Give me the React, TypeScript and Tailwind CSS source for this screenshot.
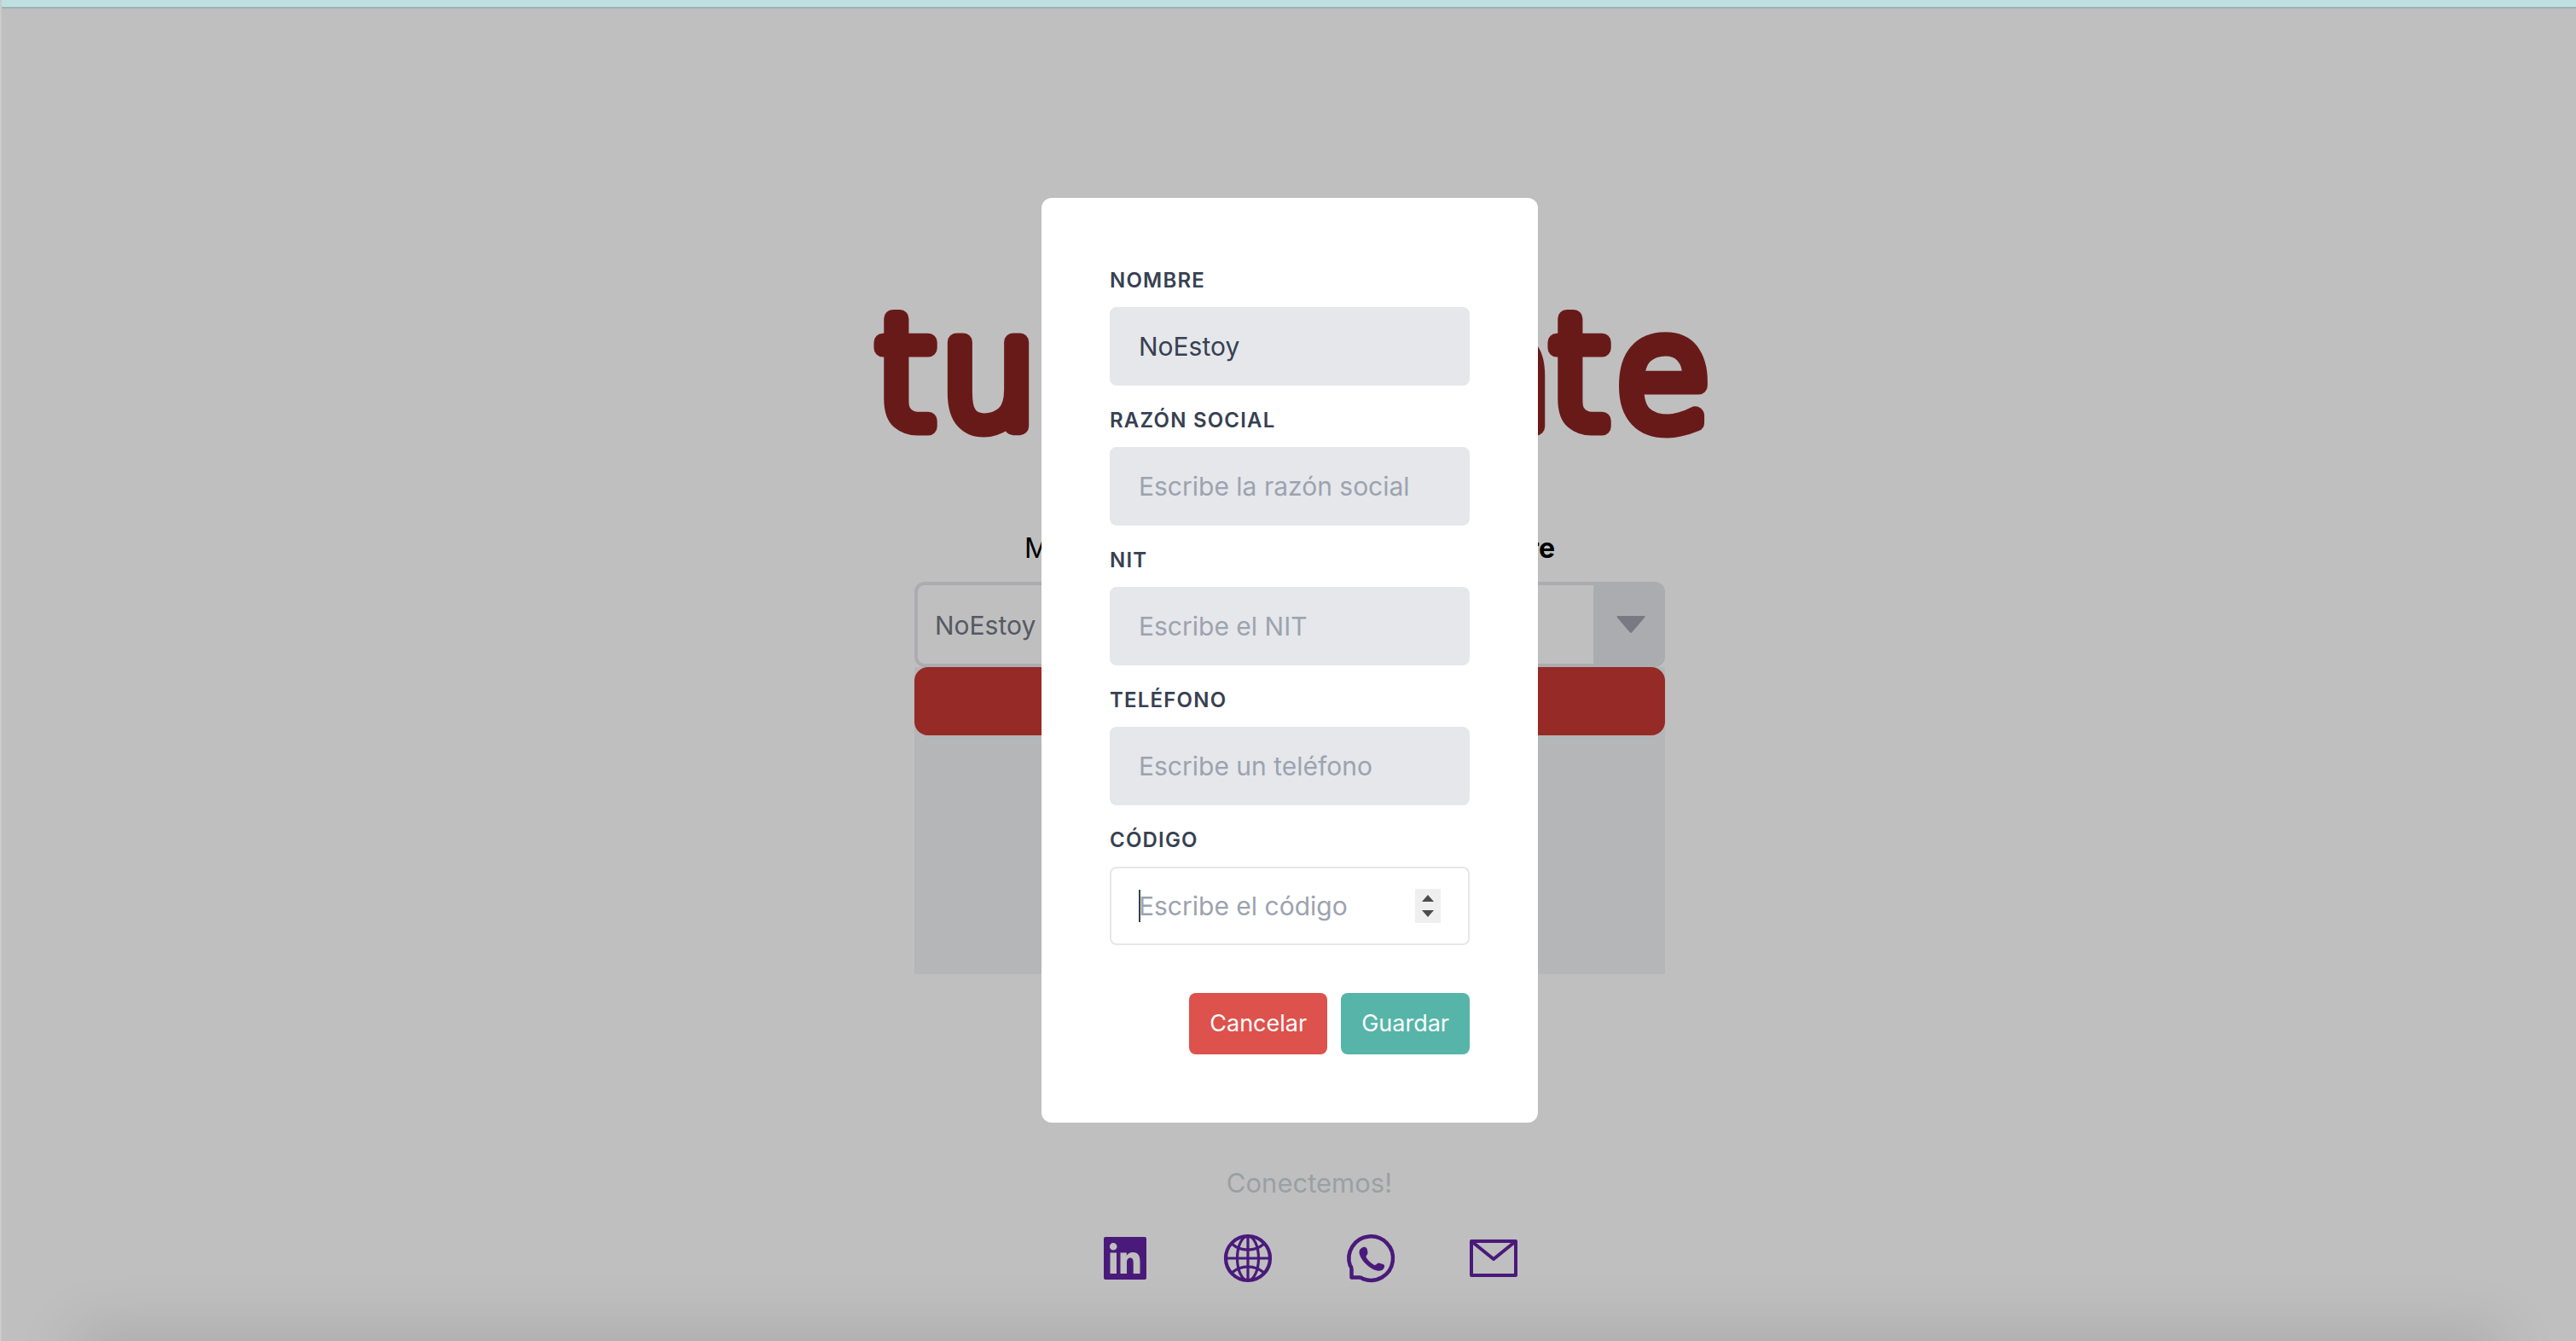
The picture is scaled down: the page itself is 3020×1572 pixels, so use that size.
import React from "react";

const fields = [
  { id: "nombre", label: "Nombre", value: "NoEstoy", placeholder: "" },
  { id: "razon", label: "Razón social", value: "", placeholder: "Escribe la razón social" },
  { id: "nit", label: "NIT", value: "", placeholder: "Escribe el NIT" },
  { id: "telefono", label: "Teléfono", value: "", placeholder: "Escribe un teléfono" },
];

function Wordmark() {
  return (
    <svg
      role="img"
      aria-label="tugerente"
      viewBox="0 0 980 170"
      className="h-[170px] w-[980px] overflow-visible fill-[#681a19] stroke-[#681a19] font-['DejaVu_Sans',sans-serif] text-[180px] font-extralight"
      strokeWidth="21"
      strokeLinejoin="round"
      strokeLinecap="round"
    >
      <text x="4" y="153">t</text>
      <text x="80" y="153">u</text>
      <text x="798" y="153" textAnchor="end">geren</text>
      <text x="794" y="153">t</text>
      <text x="983" y="153" textAnchor="end">e</text>
    </svg>
  );
}

const iconClass = "size-16 text-[#4a1a7b]";

function LinkedInIcon() {
  return (
    <svg viewBox="0 0 64 64" className={iconClass} fill="currentColor">
      <path
        fillRule="evenodd"
        d="M9 7h46a2 2 0 0 1 2 2v46a2 2 0 0 1-2 2H9a2 2 0 0 1-2-2V9a2 2 0 0 1 2-2ZM14.500 25.500v24.500h7.500V25.500ZM18.200 14a4.300 4.300 0 1 0 0 8.600a4.300 4.300 0 0 0 0-8.600ZM26.500 25.500v24.500h7.500V37.500c0-3.500 1-6 4-6s3.700 2.500 3.700 6V50h7.800V36c0-7-2-11-8.500-11-3.500 0-6 1.800-7.200 4v-3.500Z"
      />
    </svg>
  );
}

function GlobeIcon() {
  return (
    <svg viewBox="0 0 64 64" className={iconClass} fill="none" stroke="currentColor" strokeWidth="3.200">
      <circle cx="32" cy="32" r="26" strokeWidth="4.200" />
      <ellipse cx="32" cy="32" rx="12.500" ry="26" />
      <path d="M32 6v52M6 32h52M13 15c11 9.500 27 9.500 38 0M13 49c11-9.500 27-9.500 38 0" />
    </svg>
  );
}

function WhatsAppIcon() {
  return (
    <svg viewBox="0 0 64 64" className={iconClass}>
      <path
        fill="none"
        stroke="currentColor"
        strokeWidth="4.500"
        strokeLinejoin="round"
        d="M9.500 44.500V54.500h9Q21 54.500 23 56.200A25.800 25.800 0 1 0 7.800 40.500Q9.500 42 9.500 44.500Z"
      />
      <path
        fill="currentColor"
        d="M22 19.500c2.500-1.500 5-.5 5.800 2l.7 4c.3 2-2 3-2 4.500 0 2.500 8 10 10.500 10 1.700 0 2.500-2.700 4.500-2.500l5 1.500c2 .8 2 2.500 1 4.500-1.300 2.500-4 3.500-7 3.200C31 45.500 19 33.500 18.500 25c-.2-2.500 1.500-4.500 3.500-5.500Z"
      />
    </svg>
  );
}

function MailIcon() {
  return (
    <svg viewBox="0 0 64 64" className={iconClass} fill="none" stroke="currentColor" strokeWidth="4" strokeLinejoin="round">
      <path d="M6 12h52v40H6ZM6 12l26 21L58 12" />
    </svg>
  );
}

const links = [
  { label: "LinkedIn", Icon: LinkedInIcon },
  { label: "Sitio web", Icon: GlobeIcon },
  { label: "WhatsApp", Icon: WhatsAppIcon },
  { label: "Correo", Icon: MailIcon },
];

const labelClass = "block text-2xl leading-[34px] font-semibold uppercase tracking-wider text-[#374151]";
const inputClass =
  "mt-3.5 mb-6 block h-[92px] w-full rounded-lg border-2 px-8 text-[30px] text-[#374151] placeholder:text-[#9ca3af] outline-none";

export default function App() {
  return (
    <div className="relative min-h-screen overflow-hidden border-l-2 border-[#cbcbcb] bg-[#bfbfbf] font-['Inter',sans-serif]">
      <div className="h-2.5 border-b-2 border-[#9cb1b4] bg-[#bee0e1]" />
      <main className="flex flex-col items-center pt-[337px] pl-0.5">
        <Wordmark />
        <p className="mt-[102px] flex w-[622px] justify-between text-[32px] leading-[48px] text-black">
          <span>Mi</span>
          <b className="font-bold">nombre</b>
        </p>
        <div className="mt-[15px] flex h-[100px] w-[880px] overflow-hidden rounded-xl border-4 border-[#abacb0] bg-[#bfbfbf]">
          <input
            aria-label="Empresa"
            defaultValue="NoEstoy"
            className="min-w-0 grow px-5 pt-0.5 text-[30px] text-[#555963] outline-none"
          />
          <button aria-label="Abrir lista" className="flex w-20 items-center justify-center bg-[#abacb0] pl-2">
            <svg viewBox="0 0 34 20" className="h-5 w-[34px] fill-[#777a83]">
              <path d="M1 0h32q1 1 0 2L18 19.500q-1 .9-2 0L1 2q-1-1 0-2Z" />
            </svg>
          </button>
        </div>
        <section className="h-[360px] w-[880px] bg-[#b4b6b8]">
          <button aria-label="Continuar" className="block h-20 w-full rounded-2xl bg-[#952a26]" />
        </section>
      </main>
      <footer className="mt-[221px] flex flex-col items-center pl-12">
        <p className="text-[31px] leading-[48px] text-[#9c9fa3]">Conectemos!</p>
        <nav className="mt-8 flex gap-20">
          {links.map(({ label, Icon }) => (
            <a key={label} href="#" aria-label={label}>
              <Icon />
            </a>
          ))}
        </nav>
      </footer>
      <div className="absolute inset-x-24 -bottom-10 h-10 shadow-[0_0_70px_10px_rgba(0,0,0,0.13)]" />
      <div className="absolute inset-x-0 top-[232px] flex justify-center pl-0.5">
        <form role="dialog" aria-label="Datos" className="w-[582px] rounded-xl bg-white p-20">
          {fields.map((f) => (
            <div key={f.id}>
              <label htmlFor={f.id} className={labelClass}>
                {f.label}
              </label>
              <input
                id={f.id}
                defaultValue={f.value}
                placeholder={f.placeholder}
                className={`${inputClass} border-[#e5e7eb] bg-[#e5e7eb]`}
              />
            </div>
          ))}
          <label htmlFor="codigo" className={labelClass}>
            Código
          </label>
          <div className="relative">
            <input
              id="codigo"
              inputMode="numeric"
              placeholder="Escribe el código"
              className={`${inputClass} border-[#e5e7eb] bg-white`}
            />
            <span className="absolute top-[27px] left-[34px] h-[38px] w-0.5 bg-[#374151]" />
            <span className="absolute top-[26px] right-[34px] flex h-10 w-[30px] flex-col items-center justify-between bg-[#efefef] py-[7px]">
              <svg viewBox="0 0 14 8" className="h-2 w-3.5 fill-[#4d4d4d]">
                <path d="M7 0l7 8H0Z" />
              </svg>
              <svg viewBox="0 0 14 8" className="h-2 w-3.5 fill-[#4d4d4d]">
                <path d="M7 8l7-8H0Z" />
              </svg>
            </span>
          </div>
          <div className="mt-14 flex justify-end gap-4 text-[27px] leading-10 text-white">
            <button type="button" className="rounded-lg bg-[#dd524c] px-6 py-4">
              Cancelar
            </button>
            <button type="submit" className="rounded-lg bg-[#56b5a8] px-6 py-4">
              Guardar
            </button>
          </div>
        </form>
      </div>
    </div>
  );
}
